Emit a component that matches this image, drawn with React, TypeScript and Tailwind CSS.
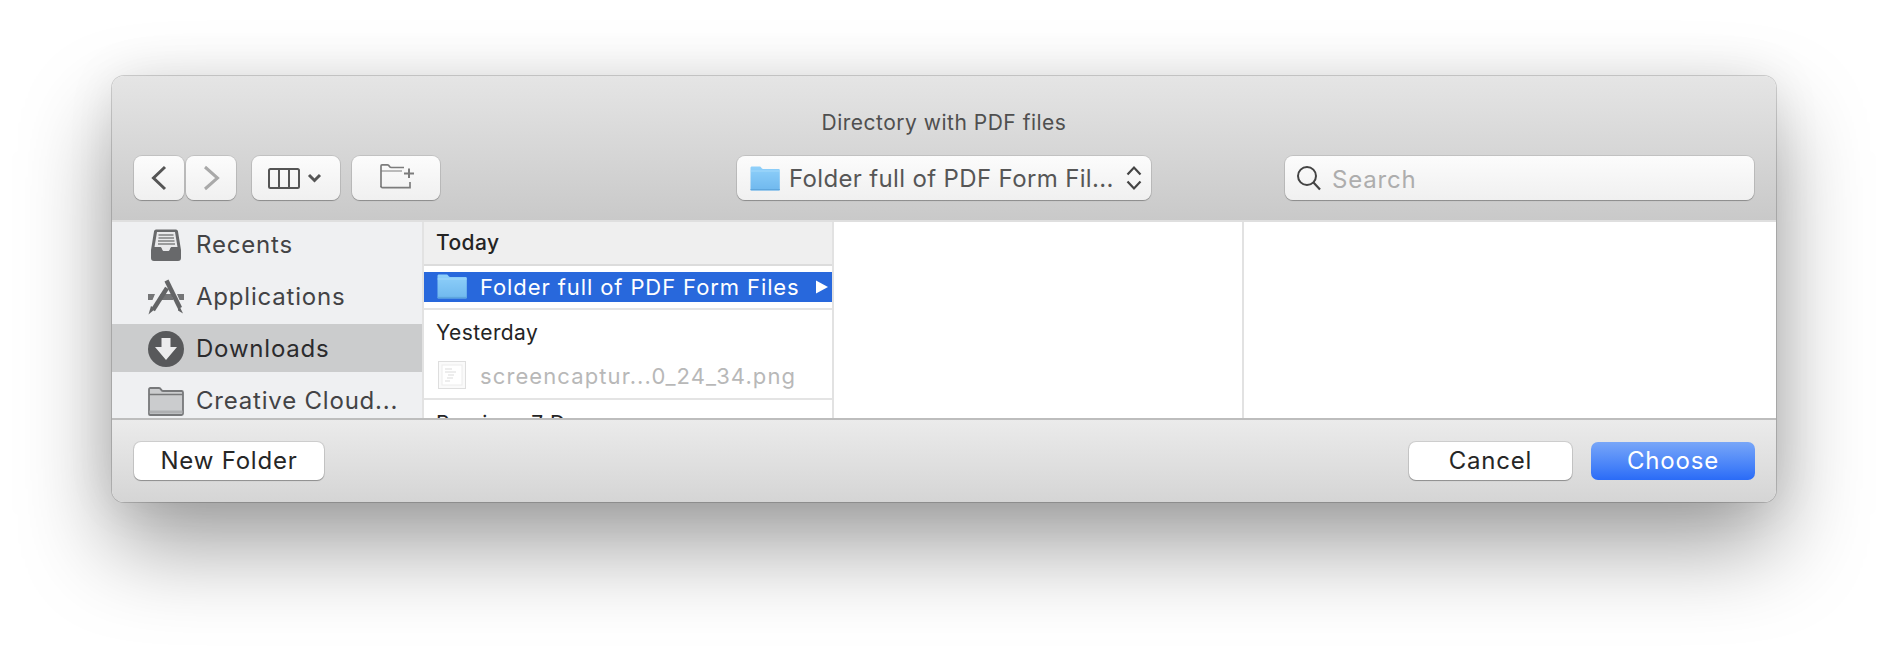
const Folder = ({ className }: { className: string }) => (
  <svg viewBox="0 0 30 25" className={className}>
    <defs>
      <linearGradient id="fb" x1="0" y1="0" x2="0" y2="1">
        <stop offset="0" stopColor="#8fd0fa" />
        <stop offset="1" stopColor="#6fb8ee" />
      </linearGradient>
    </defs>
    <path d="M0.5 2C0.5 1 1 0.5 2 0.5H9.5C10.5 0.5 11 1 11.7 2.2C12 2.8 12.5 3 13.2 3H28.5C29.3 3 29.8 3.5 29.8 4.3V23.2C29.8 24 29.3 24.6 28.5 24.6H1.8C1 24.6 0.5 24 0.5 23.2Z" fill="url(#fb)" />
    <path d="M0.5 5H29.8" stroke="#a9dcfb" strokeWidth="0.8" />
    <path d="M0.5 23.6H29.8" stroke="#5ea6dd" strokeWidth="1.4" />
  </svg>
);

const Btn = ({ className, children }: { className: string; children: React.ReactNode }) => (
  <div className={`h-[44px] rounded-[8px] bg-gradient-to-b from-[#fcfcfc] to-[#f0f0f0] shadow-[0_0_0_1px_rgba(0,0,0,0.09),0_1px_1px_rgba(0,0,0,0.25)] flex items-center justify-center ${className}`}>
    {children}
  </div>
);

const FootBtn = ({ className, children }: { className: string; children: React.ReactNode }) => (
  <div className={`h-[38px] rounded-[7px] bg-white shadow-[0_0_0_1px_rgba(0,0,0,0.1),0_1px_1px_rgba(0,0,0,0.28)] flex items-center justify-center text-[24px] text-[#262626] tracking-[0.8px] ${className}`}>
    {children}
  </div>
);

const SideRow = ({ icon, label, active }: { icon: React.ReactNode; label: string; active?: boolean }) => (
  <div className={`h-[48px] shrink-0 flex items-center pl-[36px] text-[24px] tracking-[0.8px] ${active ? "bg-[#cbcccd] text-[#2b2b2d]" : "text-[#434345]"}`}>
    <div className="w-[36px] h-[36px] flex items-center justify-center mr-[12px] shrink-0">{icon}</div>
    <span className="pt-[2px]">{label}</span>
  </div>
);

export default function App() {
  return (
    <div className="w-[1888px] h-[650px] bg-white pt-[76px] pl-[112px] overflow-hidden" style={{ fontFamily: "Inter, 'Liberation Sans', sans-serif" }}>
      <div className="w-[1664px] h-[426px] rounded-[12px] overflow-hidden flex flex-col shadow-[0_0_0_1px_rgba(0,0,0,0.16),0_44px_90px_rgba(0,0,0,0.38),0_0_50px_rgba(0,0,0,0.08)]">
        {/* toolbar */}
        <div className="h-[144px] shrink-0 flex flex-col bg-gradient-to-b from-[#e5e5e5] to-[#c9c9c9]">
          <div className="h-[80px] pt-[33px] text-center text-[21px] tracking-[0.5px] leading-[28px] text-[#4f4f4f]">Directory with PDF files</div>
          <div className="flex items-start pl-[22px]">
            <Btn className="w-[50px]">
              <svg width="50" height="44" fill="none" stroke="#555" strokeWidth="3"><path d="M31 11L19.5 22L31 33" /></svg>
            </Btn>
            <Btn className="w-[50px] ml-[2px]">
              <svg width="50" height="44" fill="none" stroke="#a9a9a9" strokeWidth="3"><path d="M19 11L31.5 22L19 33" /></svg>
            </Btn>
            <Btn className="w-[88px] ml-[16px]">
              <svg width="88" height="44" fill="none" stroke="#555">
                <rect x="17" y="13" width="30" height="19" rx="1.5" strokeWidth="2" />
                <path d="M27 13V32M37 13V32" strokeWidth="2" />
                <path d="M57 19L62.5 24.5L68 19" strokeWidth="3" />
              </svg>
            </Btn>
            <Btn className="w-[88px] ml-[12px]">
              <svg width="88" height="44" fill="none" stroke="#7c7c7c" strokeWidth="1.7">
                <path d="M29 31V10C29 9 29.5 8.8 30 8.8H35.5C36.5 8.8 37 9.5 37.5 10.5C38 11.3 38.5 11.5 39.5 11.5H52" />
                <path d="M29 15H50" strokeWidth="1.2" />
                <path d="M29 30C29 31 29.5 31.7 30.5 31.7H58V26" />
                <path d="M52 17.5H62M57 12.5V22" strokeWidth="2" />
              </svg>
            </Btn>
            <Btn className="w-[414px] ml-[297px] justify-start pl-[13px]">
              <Folder className="w-[30px] h-[25px] shrink-0" />
              <span className="ml-[9px] text-[24px] tracking-[0.35px] text-[#565656] w-[332px] whitespace-nowrap pt-[2px]">Folder full of PDF Form Fil...</span>
              <svg width="18" height="26" fill="none" stroke="#444" strokeWidth="2.2" className="shrink-0 ml-[4px]"><path d="M2.500 9.500L9 2.500L15.500 9.500M2.500 16.500L9 23.500L15.500 16.500" /></svg>
            </Btn>
            <Btn className="w-[469px] ml-[134px] justify-start pl-[11px]">
              <svg width="26" height="26" fill="none" stroke="#444" className="shrink-0"><circle cx="11" cy="11" r="9" strokeWidth="2" /><path d="M17.5 17.5L24 24.5" strokeWidth="2.2" /></svg>
              <span className="ml-[10px] text-[24px] tracking-[0.8px] text-[#adadad] pt-[3px]">Search</span>
            </Btn>
          </div>
        </div>
        <div className="h-[2px] shrink-0 bg-[#dfdfdf]" />
        {/* browser */}
        <div className="h-[196px] shrink-0 flex bg-white overflow-hidden">
          <div className="w-[310px] shrink-0 bg-[#eff0f2] overflow-hidden flex flex-col gap-[4px] -mt-[2px]">
            <SideRow
              label="Recents"
              icon={
                <svg width="34" height="34" viewBox="0 0 34 34" className="mt-[2px]">
                  <path d="M5 3.5C5 2.5 6 1.5 7 1.5H27C28 1.5 29 2.5 29 3.5L32 22V30C32 32 31 33 29 33H5C3 33 2 32 2 30V22Z" fill="#68696b" />
                  <path d="M8 4H26L28.5 19H23C22 19 21.5 19.5 21 21C20.5 22.5 20 23 19 23H15C14 23 13.500 22.500 13 21C12.500 19.500 12 19 11 19H5.500Z" fill="#e9e9eb" />
                  <path d="M9.500 7H24.500M9.500 10H25M9 13H25.500M9 16H26" stroke="#808183" strokeWidth="1.500" />
                </svg>
              }
            />
            <SideRow
              label="Applications"
              icon={
                <svg width="36" height="36" viewBox="0 0 36 36" fill="none" className="mt-[2px]">
                  <path d="M0 15H7L4.500 21H0ZM12.500 15H23.500L25.500 21H10.500ZM29 15H36V21H31.500Z" fill="#747577" />
                  <path d="M18.500 1.500L32 29" stroke="#636466" strokeWidth="4.500" />
                  <path d="M19 9L5 31" stroke="#636466" strokeWidth="4.500" />
                  <path d="M30 24L35 34.500L30 31.500Z" fill="#636466" />
                  <path d="M3 27L0.500 35.500L7 30Z" fill="#636466" />
                </svg>
              }
            />
            <SideRow
              active
              label="Downloads"
              icon={
                <svg width="36" height="36" viewBox="0 0 36 36" className="mt-[1px]">
                  <circle cx="18" cy="18" r="18" fill="#58595b" />
                  <path d="M13.500 7H22.500V16H29L18 29L7 16H13.500Z" fill="#ececed" />
                </svg>
              }
            />
            <SideRow
              label="Creative Cloud..."
              icon={
                <svg width="36" height="29" viewBox="0 0 36 29" fill="none" className="mt-[2px]">
                  <path d="M1 27V2.500C1 1.500 1.500 1 2.500 1H11C12 1 12.500 1.500 13 2.500C13.500 3.500 14 4 15 4H33.500C34.500 4 35 4.500 35 5.500V26.500C35 27.500 34.500 28 33.500 28H2C1.500 28 1 27.500 1 27Z" fill="#cbccce" stroke="#77787a" strokeWidth="1.800" />
                  <path d="M1 7.500H35" stroke="#77787a" strokeWidth="1.300" />
                  <path d="M1.500 25H34.500" stroke="#aeafb1" strokeWidth="3" />
                </svg>
              }
            />
          </div>
          <div className="w-[2px] shrink-0 bg-[#e2e2e2]" />
          {/* first column */}
          <div className="w-[408px] shrink-0 overflow-hidden text-[21px] tracking-[0.4px]">
            <div className="h-[44px] bg-[#efefef] border-b-2 border-[#dcdcdc] pl-[12px] flex items-center font-medium text-[#242424]">Today</div>
            <div className="h-[6px]" />
            <div className="h-[30px] bg-[#2868dc] flex items-center pl-[13px] pr-[4px] text-[#fff] text-[22px] tracking-[0.9px]">
              <Folder className="w-[30px] h-[27px] shrink-0 -mt-[2px]" />
              <span className="ml-[13px] flex-1 whitespace-nowrap pt-[1px]">Folder full of PDF Form Files</span>
              <svg width="12" height="14" className="shrink-0"><path d="M0 0.500L12 7L0 13.500Z" fill="#fff" /></svg>
            </div>
            <div className="h-[6px]" />
            <div className="h-[2px] bg-[#e4e4e4]" />
            <div className="h-[46px] pl-[12px] flex items-center text-[#242424]">Yesterday</div>
            <div className="h-[42px] pl-[14px] flex items-start text-[22px] tracking-[1.1px] text-[#b8b8b8]">
              <svg width="28" height="28" viewBox="0 0 28 28" className="shrink-0 mt-[5px]">
                <rect x="0.500" y="0.500" width="27" height="27" fill="#fafafa" stroke="#dedede" />
                <rect x="4" y="4" width="20" height="20" fill="#fff" stroke="#ececec" />
                <path d="M7 8H14M7 11H18M10 14H16M9 17H15M7 20H12" stroke="#dcdcdc" strokeWidth="1.200" />
              </svg>
              <span className="ml-[14px] whitespace-nowrap leading-[40px]">screencaptur...0_24_34.png</span>
            </div>
            <div className="h-[2px] bg-[#e4e4e4]" />
            <div className="pl-[12px] pt-[10px] leading-[28px] text-[#242424] whitespace-nowrap">Previous 7 Days</div>
          </div>
          <div className="w-[2px] shrink-0 bg-[#e2e2e2]" />
          <div className="w-[408px] shrink-0" />
          <div className="w-[2px] shrink-0 bg-[#e2e2e2]" />
          <div className="flex-1" />
        </div>
        <div className="h-[2px] shrink-0 bg-[#bdbdbd]" />
        {/* footer */}
        <div className="flex-1 bg-gradient-to-b from-[#ebebeb] to-[#d5d5d5] flex items-start pt-[22px] pl-[22px] pr-[21px]">
          <FootBtn className="w-[190px]">New Folder</FootBtn>
          <FootBtn className="w-[163px] ml-auto">Cancel</FootBtn>
          <FootBtn className="w-[164px] ml-[19px] !bg-transparent bg-gradient-to-b from-[#78a6f8] to-[#2a6bf7] !text-white !shadow-none">Choose</FootBtn>
        </div>
      </div>
    </div>
  );
}
